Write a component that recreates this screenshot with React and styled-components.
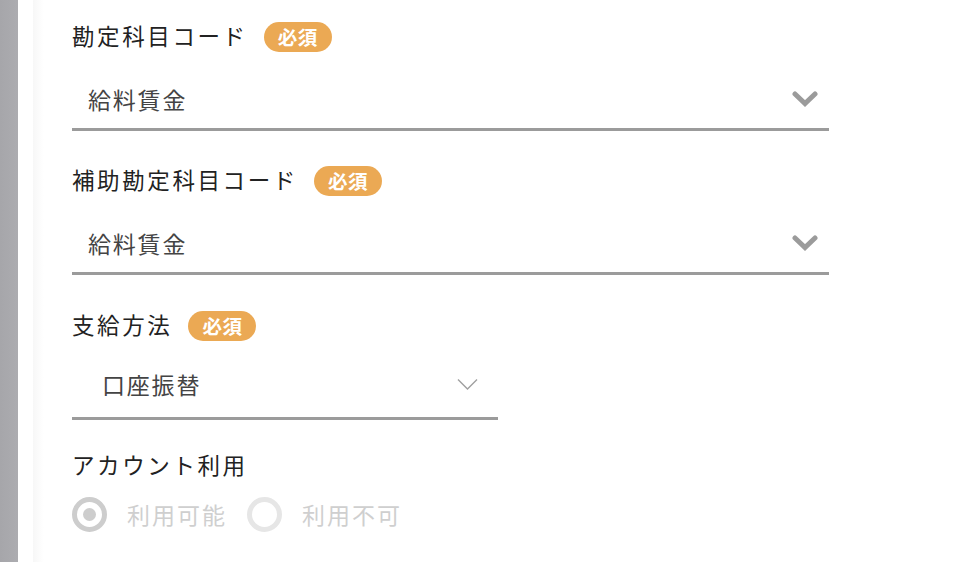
import React from 'react';
import styled, { createGlobalStyle } from 'styled-components';

const GlobalStyle = createGlobalStyle`
  html, body {
    margin: 0;
    padding: 0;
    background: #fff;
  }
  body {
    font-family: "Noto Sans CJK JP", "Noto Sans", sans-serif;
    overflow: hidden;
  }
`;

const Page = styled.div`
  display: flex;
  height: 562px;
  width: 958px;
`;

const SideBar = styled.div`
  width: 18px;
  flex-shrink: 0;
  background: linear-gradient(to right, #a6a6aa, #acacb0);
`;

const Gap = styled.div`
  width: 15px;
  flex-shrink: 0;
`;

const Card = styled.div`
  flex: 1;
  background: linear-gradient(to right, #f7f7f7, #fdfdfd 8px, #fff 11px);
  padding: 22px 0 0 39px;
  display: flex;
  flex-direction: column;
`;

const Field = styled.div`
  display: flex;
  flex-direction: column;
  margin-bottom: ${p => p.$gap || 35}px;
`;

const LabelRow = styled.div`
  display: flex;
  align-items: center;
  height: 30px;
`;

const Label = styled.span`
  font-size: 22.5px;
  letter-spacing: 2.6px;
  color: #222;
  line-height: 24px;
  padding-bottom: 5px;
`;

const Badge = styled.span`
  margin-left: 16px;
  height: 30px;
  width: 68px;
  border-radius: 15px;
  background: #eba954;
  color: #fff;
  font-weight: 700;
  font-size: 19.5px;
  line-height: 30px;
  display: flex;
  align-items: center;
  justify-content: center;
  letter-spacing: 0.5px;
`;

const Select = styled.div`
  margin-top: 10px;
  width: ${p => p.$width}px;
  height: 69px;
  box-sizing: border-box;
  border-bottom: 3px solid #9b9b9b;
  display: flex;
  align-items: center;
  justify-content: space-between;
  padding: ${p => (p.$thin ? '0 20px 0 30px' : '8px 11px 0 16px')};
`;

const Value = styled.span`
  font-size: 23px;
  line-height: 28px;
  letter-spacing: 1.8px;
  color: #444;
`;

const RadioRow = styled.div`
  display: flex;
  align-items: center;
  margin-top: 15px;
  height: 36px;
`;

const RadioItem = styled.label`
  display: flex;
  align-items: center;
  margin-right: 20px;
`;

const RadioCircle = styled.span`
  width: 35px;
  height: 35px;
  box-sizing: border-box;
  border-radius: 50%;
  border: 5px solid ${p => (p.$checked ? '#cdcdcd' : '#e6e6e6')};
  display: flex;
  align-items: center;
  justify-content: center;
  &::after {
    content: '';
    display: ${p => (p.$checked ? 'block' : 'none')};
    width: 13px;
    height: 13px;
    border-radius: 50%;
    background: #cdcdcd;
  }
`;

const RadioText = styled.span`
  margin-left: 20px;
  font-size: 23px;
  letter-spacing: 2px;
  color: #cfcfcf;
  line-height: 28px;
`;

const BoldChevron = () => (
  <svg width="26" height="16" viewBox="0 0 26 16">
    <polyline points="3,3 13,12.5 23,3" fill="none" stroke="#9b9b9b" strokeWidth="5" strokeLinecap="round" strokeLinejoin="miter" />
  </svg>
);

const ThinChevron = () => (
  <svg width="21" height="13" viewBox="0 0 21 13">
    <polyline points="1,1.5 10.5,11 20,1.5" fill="none" stroke="#a0a0a0" strokeWidth="1.4" />
  </svg>
);

export default function App() {
  return (
    <Page>
      <GlobalStyle />
      <SideBar />
      <Gap />
      <Card>
        <Field>
          <LabelRow>
            <Label>勘定科目コード</Label>
            <Badge>必須</Badge>
          </LabelRow>
          <Select $width={757}>
            <Value>給料賃金</Value>
            <BoldChevron />
          </Select>
        </Field>
        <Field $gap={36}>
          <LabelRow>
            <Label>補助勘定科目コード</Label>
            <Badge>必須</Badge>
          </LabelRow>
          <Select $width={757}>
            <Value>給料賃金</Value>
            <BoldChevron />
          </Select>
        </Field>
        <Field $gap={31}>
          <LabelRow>
            <Label>支給方法</Label>
            <Badge>必須</Badge>
          </LabelRow>
          <Select $width={426} $thin>
            <Value>口座振替</Value>
            <ThinChevron />
          </Select>
        </Field>
        <Field>
          <LabelRow>
            <Label>アカウント利用</Label>
          </LabelRow>
          <RadioRow>
            <RadioItem>
              <RadioCircle $checked />
              <RadioText>利用可能</RadioText>
            </RadioItem>
            <RadioItem>
              <RadioCircle />
              <RadioText>利用不可</RadioText>
            </RadioItem>
          </RadioRow>
        </Field>
      </Card>
    </Page>
  );
}
